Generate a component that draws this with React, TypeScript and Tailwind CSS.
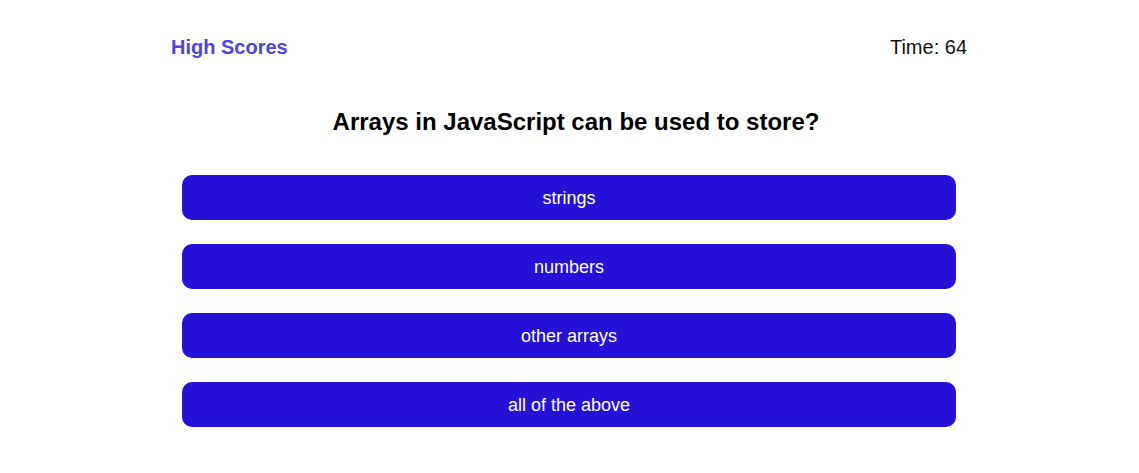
export default function App() {
  const answers = ["strings", "numbers", "other arrays", "all of the above"];
  return (
    <div className="min-h-[473px] bg-white" style={{ fontFamily: '"Liberation Sans", Arial, sans-serif' }}>
      <div className="w-[797px] mx-auto pt-[33px]">
        <div className="flex justify-between items-center h-[28px] pr-[1px]">
          <span className="text-[20px] font-bold text-[#5046d8] leading-[28px]">High Scores</span>
          <span className="text-[20px] text-[#111] leading-[28px]">Time: 64</span>
        </div>
        <h1 className="mt-[45px] pl-[13px] text-center text-[24px] font-bold leading-[32px] text-black">
          Arrays in JavaScript can be used to store?
        </h1>
        <div className="mt-[37px] ml-[11px] mr-[12px] flex flex-col gap-[24px]">
          {answers.map((a) => (
            <button
              key={a}
              className="h-[45px] w-full rounded-[10px] bg-[#2512d6] text-white text-[18px] leading-[22px]"
            >
              {a}
            </button>
          ))}
        </div>
      </div>
    </div>
  );
}
